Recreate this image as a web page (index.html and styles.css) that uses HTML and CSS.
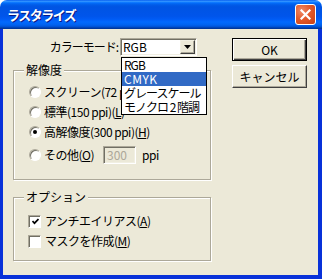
FILE: index.html
```html
<!DOCTYPE html>
<html lang="ja">

<head>
    <meta charset="UTF-8">
    <title>ラスタライズ</title>
    <link rel="stylesheet" href="styles.css">
</head>

<body>
    <div class="window">
        <div class="titlebar">
            <span class="title">ラスタライズ</span>
            <span class="close">
                <svg width="11" height="11" viewBox="0 0 11 11">
                    <path d="M1.5 1.5 L9.5 9.5 M9.5 1.5 L1.5 9.5" stroke="#fff" stroke-width="2.2" stroke-linecap="square" />
                </svg>
            </span>
        </div>

        <div class="client">
            <div class="main">
                <div class="mode-row">
                    <span class="label">カラーモード:</span>
                    <div class="combo">
                        <span class="combo-value">RGB</span>
                        <span class="combo-btn">
                            <svg width="7" height="4" viewBox="0 0 7 4"><path d="M0 0 H7 L3.5 4 Z" fill="#000" /></svg>
                        </span>
                        <!-- open dropdown list -->
                        <ul class="combo-list">
                            <li>RGB</li>
                            <li class="selected">CMYK</li>
                            <li>グレースケール</li>
                            <li>モノクロ 2 階調</li>
                        </ul>
                    </div>
                </div>

                <fieldset class="group res">
                    <legend>解像度</legend>
                    <div class="row"><span class="radio"></span>スクリーン(72 ppi)(<u>S</u>)</div>
                    <div class="row"><span class="radio"></span>標準(150 ppi)(<u>L</u>)</div>
                    <div class="row"><span class="radio on"></span>高解像度(300 ppi)(<u>H</u>)</div>
                    <div class="row other">
                        <span class="radio"></span>その他(<u>O</u>)
                        <span class="field">300</span>
                        <span class="unit">ppi</span>
                    </div>
                </fieldset>

                <fieldset class="group opts">
                    <legend>オプション</legend>
                    <div class="row check-row">
                        <span class="check">
                            <svg width="7" height="7" viewBox="0 0 7 7"><path d="M0.5 3 L2.5 5.2 L6.5 1" fill="none" stroke="#000" stroke-width="1.7" /></svg>
                        </span>アンチエイリアス(<u>A</u>)
                    </div>
                    <div class="row check-row"><span class="check"></span>マスクを作成(<u>M</u>)</div>
                </fieldset>
            </div>

            <div class="buttons">
                <button class="btn default">OK</button>
                <button class="btn">キャンセル</button>
            </div>
        </div>
    </div>
</body>

</html>
```

FILE: styles.css
```css
* {
    margin: 0;
    padding: 0;
    box-sizing: border-box;
}

body {
    width: 322px;
    height: 279px;
    overflow: hidden;
    background: #ffffff;
    font-family: "Noto Sans CJK JP", "Noto Sans", sans-serif;
    font-size: 12px;
    line-height: 14px;
    color: #000;
}

.window {
    width: 322px;
    height: 279px;
    display: flex;
    flex-direction: column;
}

/* Title bar */
.titlebar {
    height: 29px;
    flex: none;
    border-radius: 7px 7px 0 0;
    background: linear-gradient(to bottom, #0058ee 0%, #3593ff 4%, #288eff 6%, #127dff 8%,
        #036ffc 10%, #0262ee 14%, #0057e5 20%, #0054e3 24%, #0055eb 56%, #005bf5 66%,
        #026afe 76%, #0062ef 86%, #0052d6 92%, #0040ab 96%, #003092 100%);
    display: flex;
    align-items: center;
    justify-content: space-between;
    padding: 0 6px 0 7px;
}

.title {
    color: #fff;
    font-weight: bold;
    font-size: 13px;
    letter-spacing: -1.5px;
    text-shadow: 1px 1px 0 #0a1883;
}

.close {
    width: 21px;
    height: 21px;
    border: 1px solid #fff;
    border-radius: 3px;
    background: radial-gradient(circle at 30% 30%, #f08a68 0%, #e35a2c 45%, #c83f12 100%);
    display: flex;
    align-items: center;
    justify-content: center;
}

/* Client area */
.client {
    flex: 1;
    background: #ece9d8;
    border: solid #0831d9;
    border-width: 0 4px 4px 3px;
    display: flex;
    padding: 9px 0 0 10px;
}

.main {
    width: 199px;
}

.mode-row {
    display: flex;
    align-items: center;
    justify-content: flex-end;
    padding-right: 15px;
    letter-spacing: -1px;
}

.label {
    margin-right: 2px;
}

.combo {
    position: relative;
    width: 77px;
    height: 18px;
    background: #fff;
    border: 1px solid;
    border-color: #aca899 #fff #fff #aca899;
    box-shadow: inset 1px 1px 0 #716f64, inset -1px -1px 0 #f1efe2;
    display: flex;
    align-items: center;
    justify-content: space-between;
    padding: 1px 1px 1px 2px;
    letter-spacing: 0;
}

.combo-btn {
    width: 15px;
    height: 14px;
    background: #ece9d8;
    border: 1px solid;
    border-color: #f1efe2 #404040 #404040 #f1efe2;
    box-shadow: inset -1px -1px 0 #aca899;
    display: flex;
    align-items: center;
    justify-content: center;
}

.combo-list {
    position: absolute;
    top: 18px;
    left: 0;
    width: 86px;
    background: #fff;
    border: 1px solid #000;
    list-style: none;
    z-index: 10;
    letter-spacing: -1px;
}

.combo-list li {
    height: 14px;
    padding-left: 2px;
    white-space: nowrap;
}

.combo-list li.selected {
    background: #316ac5;
    color: #fff;
    letter-spacing: 0.5px;
}

/* Group boxes */
.group {
    border: 1px solid #aca899;
    box-shadow: inset 1px 1px 0 #fff, 1px 1px 0 #fff;
    padding: 5px 0 13px 10px;
    margin-right: 1px;
}

.group legend {
    padding: 0 2px;
    background: #ece9d8;
    line-height: 14px;
}

.res {
    margin-top: 7px;
}

.opts {
    margin-top: 10px;
    padding: 7px 0 9px 10px;
}

.row {
    display: flex;
    align-items: center;
    height: 20px;
    padding-left: 5px;
    white-space: nowrap;
    letter-spacing: -0.5px;
}

.row.other {
    height: 22px;
    margin-top: 2px;
}

.radio {
    width: 12px;
    height: 12px;
    flex: none;
    border-radius: 50%;
    background: #fff;
    border: 1px solid;
    border-color: #aca899 #fff #fff #aca899;
    box-shadow: inset 1px 1px 0 #716f64;
    margin-right: 3px;
    display: flex;
    align-items: center;
    justify-content: center;
}

.radio.on::after {
    content: '';
    width: 4px;
    height: 4px;
    border-radius: 50%;
    background: #000;
}

.field {
    width: 33px;
    height: 18px;
    margin-left: 9px;
    border: 1px solid;
    border-color: #aca899 #fff #fff #aca899;
    box-shadow: inset 1px 1px 0 #716f64, inset -1px -1px 0 #f1efe2;
    color: #aca899;
    padding: 1px 0 0 3px;
    letter-spacing: 0;
}

.unit {
    margin-left: 6px;
}

.check-row {
    padding-left: 4px;
}

.check {
    width: 13px;
    height: 13px;
    flex: none;
    background: #fff;
    border: 1px solid;
    border-color: #aca899 #fff #fff #aca899;
    box-shadow: inset 1px 1px 0 #716f64;
    margin-right: 4px;
    display: flex;
    align-items: center;
    justify-content: center;
    padding: 1px 0 0 1px;
}

/* Buttons */
.buttons {
    display: flex;
    flex-direction: column;
    gap: 4px;
    margin-left: 20px;
}

.btn {
    width: 75px;
    height: 23px;
    font: inherit;
    font-weight: normal;
    color: #000;
    background: #ece9d8;
    border: 1px solid;
    border-color: #fff #404040 #404040 #fff;
    box-shadow: inset -1px -1px 0 #aca899;
}

.btn.default {
    border-color: #000;
    box-shadow: inset 1px 1px 0 #fff, inset -1px -1px 0 #404040, inset -2px -2px 0 #aca899;
}
```
